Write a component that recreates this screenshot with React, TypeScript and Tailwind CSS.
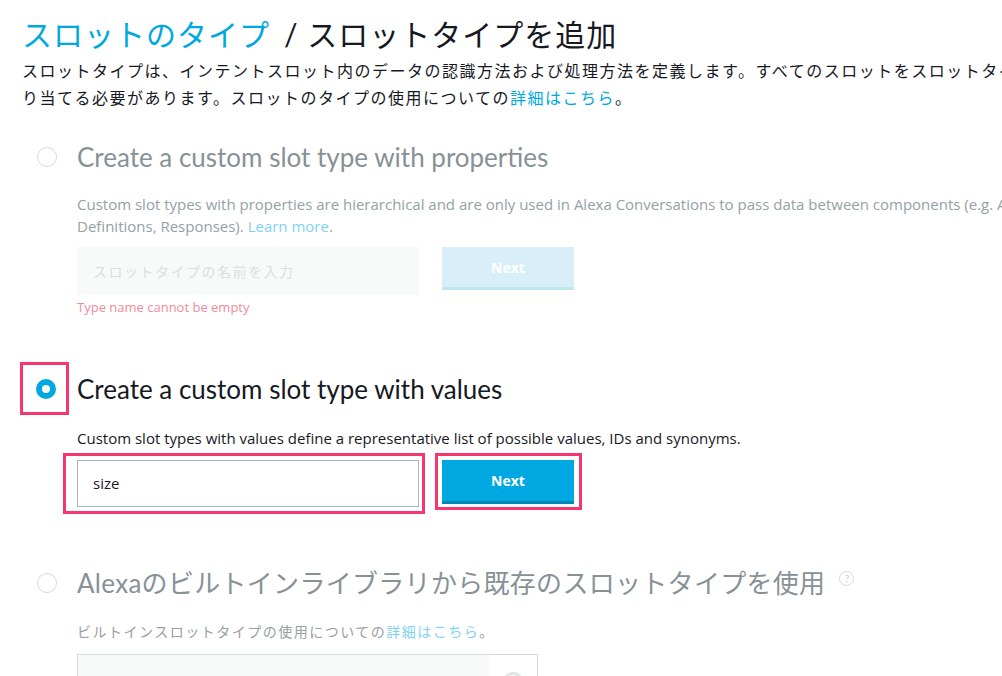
import React from 'react';

const font = "font-['Lato','Noto_Sans_CJK_JP',sans-serif]";
const small = "font-['Open_Sans','Noto_Sans_CJK_JP',sans-serif]";

const Radio: React.FC<{ checked?: boolean; highlight?: boolean }> = ({ checked, highlight }) => (
  <div className="relative w-[55px] h-[40px] flex items-center shrink-0">
    {checked ? (
      <div className="ml-[14px] w-[20px] h-[20px] rounded-full border-[6px] border-[#00a8e1] bg-white" />
    ) : (
      <div className="ml-[15px] w-[20px] h-[20px] rounded-full border border-[#d5dbdb] bg-white" />
    )}
    {highlight && (
      <div className="absolute left-[-2px] top-[-7px] w-[49px] h-[53px] border-[3px] border-[#f5366f]" />
    )}
  </div>
);

const App: React.FC = () => {
  return (
    <div className={`w-[1002px] h-[676px] overflow-hidden bg-white ${font}`}>
      <div className="w-[1082px] pl-[22px] pt-[14px]">
        {/* Header */}
        <h1 className="h-[40px] leading-[40px] text-[30px] tracking-[1px] text-[#16191f] whitespace-nowrap">
          <span className="text-[#00a8e1]">スロットのタイプ</span>
          <span className="ml-[14px]">/ スロットタイプを追加</span>
        </h1>
        <p className="mt-[3px] text-[16px] leading-[27px] tracking-[1.5px] text-[#16191f]">
          スロットタイプは、インテントスロット内のデータの認識方法および処理方法を定義します。すべてのスロットをスロットタイプに割り当てる必要があります。スロットのタイプの使用についての
          <span className="text-[#00a8e1]">詳細はこちら</span>。
        </p>

        {/* Option 1 */}
        <div className="mt-[26px] flex items-center h-[40px]">
          <Radio />
          <span className="text-[26px] text-[#879196] whitespace-nowrap">Create a custom slot type with properties</span>
        </div>
        <div className={`pl-[55px] ${small}`}>
          <p className="mt-[16px] text-[15px] leading-[22px] text-[#95a1a5] pr-[20px]">
            Custom slot types with properties are hierarchical and are only used in Alexa Conversations to pass data between components (e.g. API Definitions, Responses).{' '}
            <span className="text-[#7fd3f2]">Learn more</span>.
          </p>
          <div className="mt-[10px] flex gap-[23px] items-start">
            <div className="w-[342px] h-[48px] bg-[#f8f9f9] flex items-center pl-[16px] text-[14px] tracking-[1.5px] text-[#dadfe0]">
              スロットタイプの名前を入力
            </div>
            <div className="w-[132px] h-[43px] bg-[#d8eff9] border-b-[3px] border-[#c3e6f5] flex items-center justify-center text-[14px] font-bold text-white">
              Next
            </div>
          </div>
          <p className="mt-[3px] text-[13px] leading-[18px] text-[#f08c9c]">Type name cannot be empty</p>
        </div>

        {/* Option 2 */}
        <div className="mt-[53px] flex items-center h-[40px]">
          <Radio checked highlight />
          <span className="text-[26px] text-[#16191f] whitespace-nowrap">Create a custom slot type with values</span>
        </div>
        <div className={`pl-[55px] ${small}`}>
          <p className="mt-[18px] text-[15px] leading-[22px] text-[#16191f]">
            Custom slot types with values define a representative list of possible values, IDs and synonyms.
          </p>
          <div className="mt-[11px] flex gap-[23px] items-start">
            <div className="relative w-[342px] h-[47px]">
              <div className="w-full h-full border border-[#aab7b8] bg-white flex items-center pl-[15px] text-[15px] text-[#16191f]">
                size
              </div>
              <div className="absolute left-[-14px] top-[-7px] w-[362px] h-[61px] border-[3px] border-[#f5366f]" />
            </div>
            <div className="relative w-[132px] h-[44px]">
              <div className="w-full h-full bg-[#00a8e1] border-b-[3px] border-[#0087b8] flex items-center justify-center text-[14px] font-bold text-white">
                Next
              </div>
              <div className="absolute left-[-7px] top-[-7px] w-[147px] h-[57px] border-[3px] border-[#f5366f]" />
            </div>
          </div>
        </div>

        {/* Option 3 */}
        <div className="mt-[56px] flex items-center h-[40px]">
          <Radio />
          <span className="text-[26px] tracking-[0.3px] text-[#879196] whitespace-nowrap">Alexaのビルトインライブラリから既存のスロットタイプを使用</span>
          <span className="ml-[14px] mb-[10px] w-[15px] h-[15px] rounded-full border border-[#d5dbdb] flex items-center justify-center text-[10px] leading-none text-[#c5cccd]">
            ?
          </span>
        </div>
        <div className={`pl-[55px] ${small}`}>
          <p className="mt-[18px] text-[14px] leading-[22px] tracking-[1.5px] text-[#95a1a5]">
            ビルトインスロットタイプの使用についての<span className="text-[#7fd3f2]">詳細はこちら</span>。
          </p>
          <div className="mt-[11px] w-[461px] h-[46px] border border-[#d5dbdb] flex">
            <div className="flex-1 bg-[#f8f9f9] flex items-center pl-[15px] pt-[30px] text-[14px] tracking-[1.5px] text-[#dadfe0]">
              ビルトインを検索
            </div>
            <div className="w-[48px] flex justify-center pt-[17px]">
              <div className="w-[22px] h-[22px] rounded-full border-[3px] border-[#e1e4e5]" />
            </div>
          </div>
        </div>
      </div>
    </div>
  );
};

export default App;
